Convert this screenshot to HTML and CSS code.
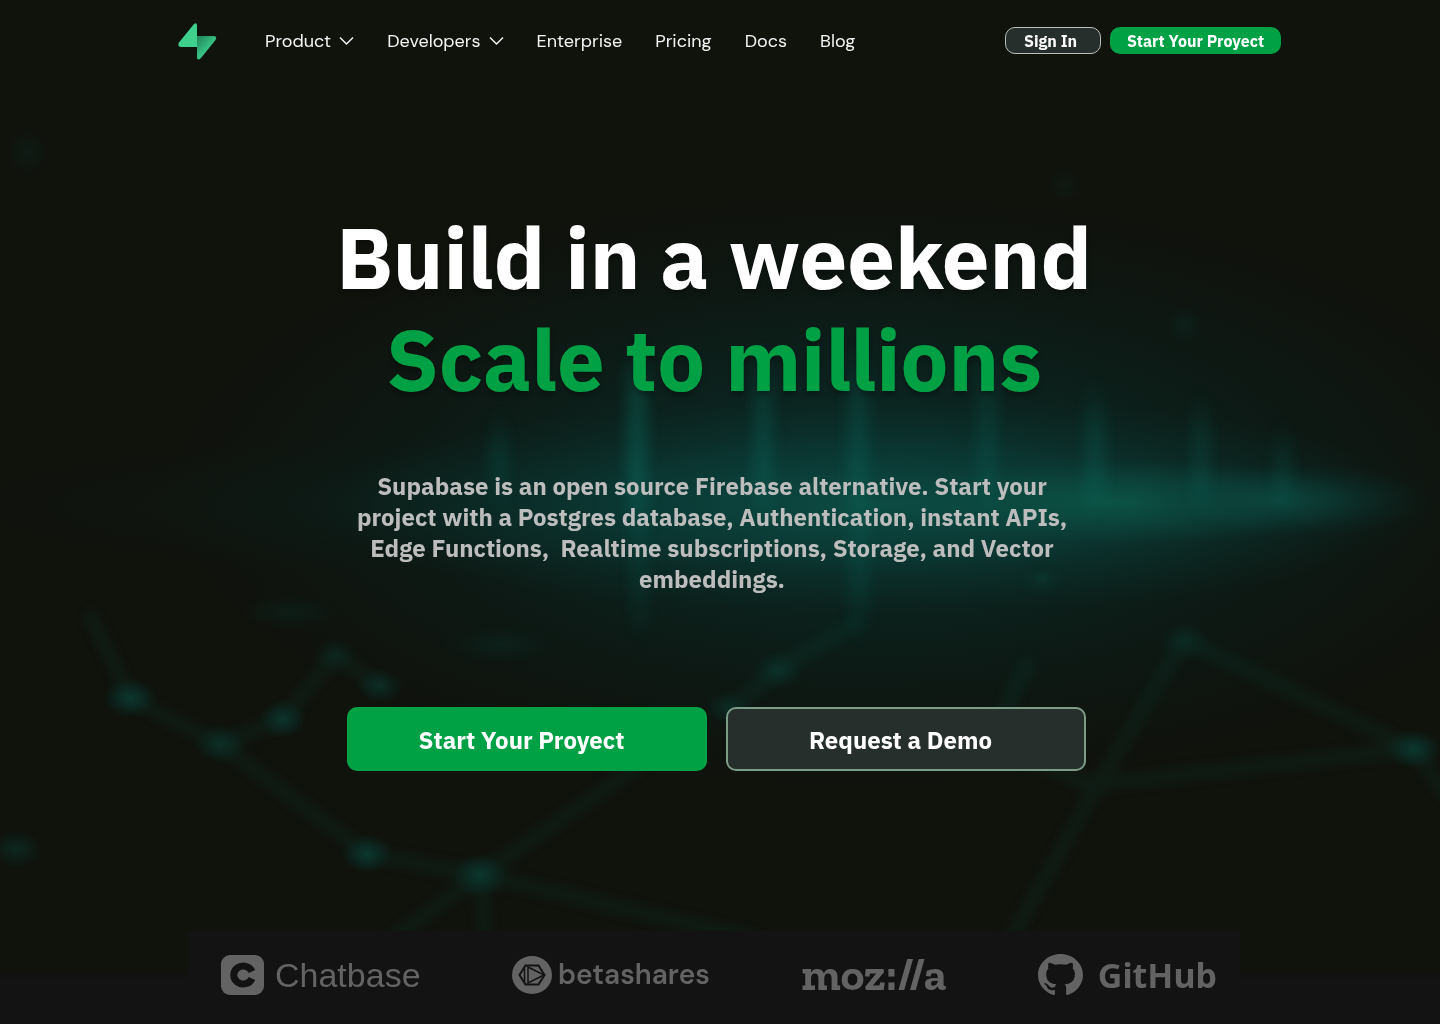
FILE: index.html
```html
<!DOCTYPE html>
<html lang="en">
<head>
<meta charset="utf-8">
<meta name="viewport" content="width=device-width, initial-scale=1">
<title>Supabase</title>
<link rel="stylesheet" href="styles.css">
</head>
<body>
<svg class="backdrop" viewBox="0 0 1440 1024" preserveAspectRatio="xMidYMid slice" aria-hidden="true">
  <defs>
    <radialGradient id="haze"><stop offset="0" stop-color="#0a2f2c"/><stop offset=".5" stop-color="#0a2420" stop-opacity=".65"/><stop offset="1" stop-color="#0a1a16" stop-opacity="0"/></radialGradient>
    <radialGradient id="band"><stop offset="0" stop-color="#0c4c43"/><stop offset=".5" stop-color="#0b403b" stop-opacity=".6"/><stop offset="1" stop-color="#0a302c" stop-opacity="0"/></radialGradient>
    <radialGradient id="core"><stop offset="0" stop-color="#0c5a49"/><stop offset=".5" stop-color="#0b5245" stop-opacity=".6"/><stop offset="1" stop-color="#0a4a40" stop-opacity="0"/></radialGradient>
    <radialGradient id="node"><stop offset="0" stop-color="#0c3a31" stop-opacity=".95"/><stop offset=".45" stop-color="#0b2f28" stop-opacity=".7"/><stop offset="1" stop-color="#0b2a24" stop-opacity="0"/></radialGradient>
    <filter id="soft" filterUnits="userSpaceOnUse" x="-50" y="0" width="1540" height="1024" color-interpolation-filters="sRGB"><feGaussianBlur stdDeviation="7"/></filter>
    <filter id="beam" filterUnits="userSpaceOnUse" x="0" y="100" width="1440" height="700" color-interpolation-filters="sRGB"><feGaussianBlur stdDeviation="8 18"/></filter>
  </defs>
  <rect width="1440" height="1024" fill="#10120c"/>
  <ellipse cx="860" cy="490" rx="700" ry="300" fill="url(#haze)"/>
  <ellipse cx="720" cy="505" rx="780" ry="80" fill="url(#haze)" opacity=".5"/>
  <ellipse cx="880" cy="505" rx="560" ry="110" fill="url(#band)"/>
  <ellipse cx="1120" cy="502" rx="240" ry="42" fill="url(#core)" opacity=".8"/>
  <ellipse cx="1280" cy="500" rx="150" ry="38" fill="url(#band)" opacity=".7"/>
  <g filter="url(#beam)" fill="#0cb4a0" opacity=".3">
    <rect x="628" y="370" width="18" height="130" opacity=".8"/>
    <rect x="632" y="490" width="14" height="130" opacity=".35"/>
    <rect x="755" y="370" width="16" height="130" opacity=".6"/>
    <rect x="848" y="370" width="20" height="130" opacity=".5"/>
    <rect x="850" y="510" width="18" height="110" opacity=".35"/>
    <rect x="978" y="370" width="18" height="120" opacity=".4"/>
    <rect x="1086" y="405" width="18" height="90" opacity=".5"/>
    <rect x="1194" y="415" width="14" height="80" opacity=".5"/>
    <rect x="1276" y="445" width="14" height="50" opacity=".5"/>
    <rect x="492" y="435" width="14" height="50" opacity=".6"/>
  </g>
  <g filter="url(#soft)" fill="none" stroke="#00b08c" stroke-width="13" opacity=".08">
    <path d="M130 698L220 744L283 719L335 655L380 686"/>
    <path d="M88 610L130 698M220 744L367 854L480 875L640 765M480 875L390 940M482 875L484 940M480 875L760 940"/>
    <path d="M1184 640L1095 790L1010 940M1090 785L1414 749L1184 640M1414 749L1450 800M1030 660L990 740L1090 785"/>
    <path d="M860 620L778 670L730 710"/>
  </g>
  <g fill="url(#node)">
    <ellipse cx="130" cy="698" rx="28" ry="20"/>
    <ellipse cx="220" cy="744" rx="26" ry="20" opacity=".7"/>
    <ellipse cx="283" cy="719" rx="24" ry="20" opacity=".9"/>
    <ellipse cx="380" cy="686" rx="24" ry="18" opacity=".7"/>
    <ellipse cx="335" cy="655" rx="22" ry="18" opacity=".4"/>
    <ellipse cx="367" cy="854" rx="26" ry="20"/>
    <ellipse cx="480" cy="875" rx="28" ry="22"/>
    <ellipse cx="16" cy="849" rx="28" ry="20" opacity=".6"/>
    <ellipse cx="778" cy="670" rx="26" ry="20" opacity=".7"/>
    <ellipse cx="728" cy="708" rx="24" ry="18" opacity=".6"/>
    <ellipse cx="1184" cy="640" rx="26" ry="20" opacity=".5"/>
    <ellipse cx="1414" cy="749" rx="28" ry="20"/>
    <ellipse cx="1042" cy="578" rx="26" ry="18" opacity=".8"/>
    <ellipse cx="290" cy="612" rx="50" ry="18" opacity=".3"/>
    <ellipse cx="500" cy="645" rx="60" ry="20" opacity=".3"/>
    <ellipse cx="28" cy="152" rx="22" ry="24" opacity=".25"/>
    <ellipse cx="1185" cy="325" rx="20" ry="20" opacity=".3"/>
    <ellipse cx="1065" cy="185" rx="20" ry="18" opacity=".2"/>
  </g>
</svg>

<header class="topbar">
  <a class="brand" href="#" aria-label="Supabase">
    <svg width="40" height="38" viewBox="0 0 40 38">
      <defs><linearGradient id="bolt" x1="20" y1="17" x2="30" y2="27" gradientUnits="userSpaceOnUse"><stop stop-color="#218a5e"/><stop offset="1" stop-color="#37c184"/></linearGradient></defs>
      <path d="M20 14H37Q40.500 14.500 38.500 18L24 36Q21 39 20 36Z" fill="url(#bolt)"/>
      <path d="M20 25H4Q0 24.500 2 20.500L17 2Q19.500 0 20 3Z" fill="#3fd08e"/>
    </svg>
  </a>
  <nav class="menu" aria-label="Main">
    <button class="menu-item" type="button">Product <svg class="chevron" width="15" height="10" viewBox="0 0 15 10"><path d="M1 1.500L7.500 8L14 1.500"/></svg></button>
    <button class="menu-item" type="button">Developers <svg class="chevron" width="15" height="10" viewBox="0 0 15 10"><path d="M1 1.500L7.500 8L14 1.500"/></svg></button>
    <a class="menu-item" href="#">Enterprise</a>
    <a class="menu-item" href="#">Pricing</a>
    <a class="menu-item" href="#">Docs</a>
    <a class="menu-item" href="#">Blog</a>
  </nav>
  <div class="account">
    <button class="btn btn-small btn-signin" type="button">Sign In</button>
    <button class="btn btn-small btn-primary btn-start" type="button">Start Your Proyect</button>
  </div>
</header>

<main class="hero">
  <h1 class="headline">Build in a weekend<br><span class="accent">Scale to millions</span></h1>
  <p class="lead">Supabase is an open source Firebase alternative. Start your<br>project with a Postgres database, Authentication, instant APIs,<br>Edge Functions,&nbsp; Realtime subscriptions, Storage, and Vector<br>embeddings.</p>
  <div class="actions">
    <button class="btn btn-large btn-primary" type="button">Start Your Proyect</button>
    <button class="btn btn-large btn-outline" type="button">Request a Demo</button>
  </div>
</main>

<footer class="sponsors">
  <ul class="sponsor-list">
    <li class="sponsor chatbase">
      <svg width="43" height="40" viewBox="0 0 43 40"><rect width="43" height="40" rx="9" fill="#636363"/><path d="M31 16.500A9.500 9 0 1 0 31 23.500" fill="none" stroke="#131313" stroke-width="7"/></svg>
      <span>Chatbase</span>
    </li>
    <li class="sponsor betashares">
      <svg width="40" height="38" viewBox="0 0 40 38"><ellipse cx="20" cy="19" rx="20" ry="19" fill="#636363"/><g fill="none" stroke="#131313" stroke-width="1.500"><path d="M13.500 9.500H26.500L32.500 19L26.500 28.500H13.500L7.500 19Z" stroke-width="2"/><path d="M16 11L32 19L16 27ZM12.500 11V27"/></g></svg>
      <span>betashares</span>
    </li>
    <li class="sponsor mozilla"><span>moz://a</span></li>
    <li class="sponsor github">
      <svg width="45" height="42" viewBox="0 0 16 16" preserveAspectRatio="none"><path fill="#636363" d="M8 0C3.580 0 0 3.580 0 8c0 3.540 2.290 6.530 5.470 7.590.4.070.55-.17.55-.38 0-.19-.01-.82-.01-1.490-2.010.37-2.530-.49-2.690-.94-.09-.23-.48-.94-.82-1.130-.28-.15-.68-.52-.01-.53.63-.01 1.080.58 1.230.82.72 1.210 1.870.87 2.330.66.070-.52.28-.87.51-1.070-1.780-.2-3.640-.89-3.640-3.950 0-.87.31-1.590.82-2.150-.08-.2-.36-1.020.08-2.120 0 0 .67-.21 2.200.82.64-.18 1.320-.27 2-.27s1.360.09 2 .27c1.530-1.040 2.200-.82 2.200-.82.44 1.100.16 1.920.08 2.120.51.56.82 1.270.82 2.150 0 3.070-1.870 3.750-3.650 3.950.29.25.54.73.54 1.480 0 1.070-.01 1.930-.01 2.200 0 .21.15.46.55.38A8.010 8.010 0 0 0 16 8c0-4.420-3.580-8-8-8"/></svg>
      <span>GitHub</span>
    </li>
  </ul>
</footer>
</body>
</html>
```
FILE: styles.css
```css
* { box-sizing: border-box; }

body {
  margin: 0;
  min-height: 100vh;
  display: flex;
  flex-direction: column;
  position: relative;
  background: #10120c;
  color: #fff;
  font-family: "IBM Plex Sans", "Noto Sans", sans-serif;
}

.backdrop {
  position: absolute;
  inset: 0;
  width: 100%;
  height: 100%;
  z-index: -1;
}

button { font: inherit; color: inherit; cursor: pointer; }
a { color: inherit; text-decoration: none; }

.topbar {
  display: flex;
  align-items: center;
  height: 81px;
  padding: 0 159px 0 177px;
}

.brand { display: flex; margin-right: 48px; }

.menu { display: flex; gap: 33px; }

.menu-item {
  display: flex;
  align-items: center;
  gap: 8px;
  padding: 0;
  border: 0;
  background: none;
  color: #f4f4f4;
  font-family: "DM Sans", Inter, sans-serif;
  font-size: 18px;
  font-weight: 400;
  line-height: 24px;
}

.chevron { fill: none; stroke: currentColor; stroke-width: 1.5; }

.account { display: flex; gap: 9px; margin-left: auto; }

.btn {
  padding: 0;
  border: 0;
  font-weight: 700;
  text-align: center;
  white-space: nowrap;
}

.btn-small { height: 27px; border-radius: 10px; font-size: 16px; line-height: 24px; }
.btn-large { width: 360px; height: 64px; padding: 2px 10px 0 0; border-radius: 10px; font-size: 24px; line-height: 32px; }
.btn-primary { background: #00a045; }
.btn-signin { width: 96px; padding-right: 5px; border: 1px solid #b9bdbb; background: #262f2b; }
.btn-start { width: 171px; }
.btn-outline { border: 2px solid #7d9c88; background: #262f2b; }

.hero {
  flex: 1;
  display: flex;
  flex-direction: column;
  align-items: center;
  padding: 125px 8px 64px 0;
  text-align: center;
}

.headline {
  margin: 0 4px 0 0;
  font-size: 85px;
  font-weight: 700;
  line-height: 102px;
  text-shadow: 0 4px 4px rgba(0, 0, 0, .25);
}

.accent { color: #00a045; }

.lead {
  margin: 61px 8px 112px 0;
  color: #bdbdbd;
  font-size: 24px;
  font-weight: 700;
  line-height: 31px;
}

.actions { display: flex; gap: 19px; }

.sponsors {
  padding: 0 200px 0 188px;
  background: linear-gradient(transparent 36px, #131313 50px);
}

.sponsor-list {
  display: flex;
  justify-content: space-between;
  align-items: center;
  height: 93px;
  margin: 0;
  padding: 0 23px 5px 33px;
  list-style: none;
  background: #131313;
}

.sponsor { display: flex; align-items: center; color: #636363; line-height: 40px; }
.chatbase { gap: 11px; font-family: "Liberation Sans", sans-serif; font-size: 34px; }
.betashares { gap: 6px; font-family: "DM Sans", Lato, sans-serif; font-size: 28px; font-weight: 600; }
.mozilla { font-family: "Zilla Slab", "DejaVu Serif", serif; font-size: 45px; font-weight: 700; }
.github { gap: 15px; font-family: "Noto Sans", sans-serif; font-size: 34px; font-weight: 700; }
```
